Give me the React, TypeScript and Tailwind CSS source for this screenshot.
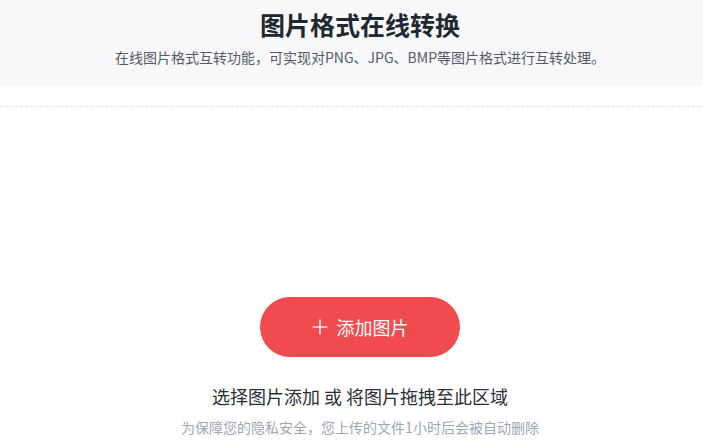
const font = { fontFamily: '"Noto Sans CJK SC", "Noto Sans", sans-serif' };

export default function App() {
  return (
    <div className="w-full min-h-screen bg-white overflow-hidden" style={font}>
      <div className="w-[720px]">
        {/* Header */}
        <div className="bg-[#f8f8fa] h-[86px] flex flex-col items-center pt-[6px]">
          <h1 className="text-[25px] leading-[36px] font-bold text-[#222831]">图片格式在线转换</h1>
          <p className="mt-[5px] text-[14px] leading-[20px] text-[#555a66]">
            在线图片格式互转功能，可实现对PNG、JPG、BMP等图片格式进行互转处理。
          </p>
        </div>

        {/* Upload area */}
        <div className="mt-[20px] border-t border-dashed border-[#e3e3e3] flex flex-col items-center pt-[190px]">
          <button className="w-[200px] h-[60px] rounded-full bg-[#f04b4e] text-white flex items-center justify-center gap-[9px] text-[18px]">
            <svg width="16" height="16" viewBox="0 0 16 16" className="opacity-90">
              <path d="M8 0.5v15M0.5 8h15" stroke="white" strokeWidth="1.6" fill="none" />
            </svg>
            <span className="leading-none">添加图片</span>
          </button>
          <p className="mt-[26px] text-[18px] leading-[26px] text-[#2b2f36]">选择图片添加 或 将图片拖拽至此区域</p>
          <p className="mt-[8px] text-[14px] leading-[20px] text-[#a0a6b8]">
            为保障您的隐私安全，您上传的文件1小时后会被自动删除
          </p>
        </div>
      </div>
    </div>
  );
}
